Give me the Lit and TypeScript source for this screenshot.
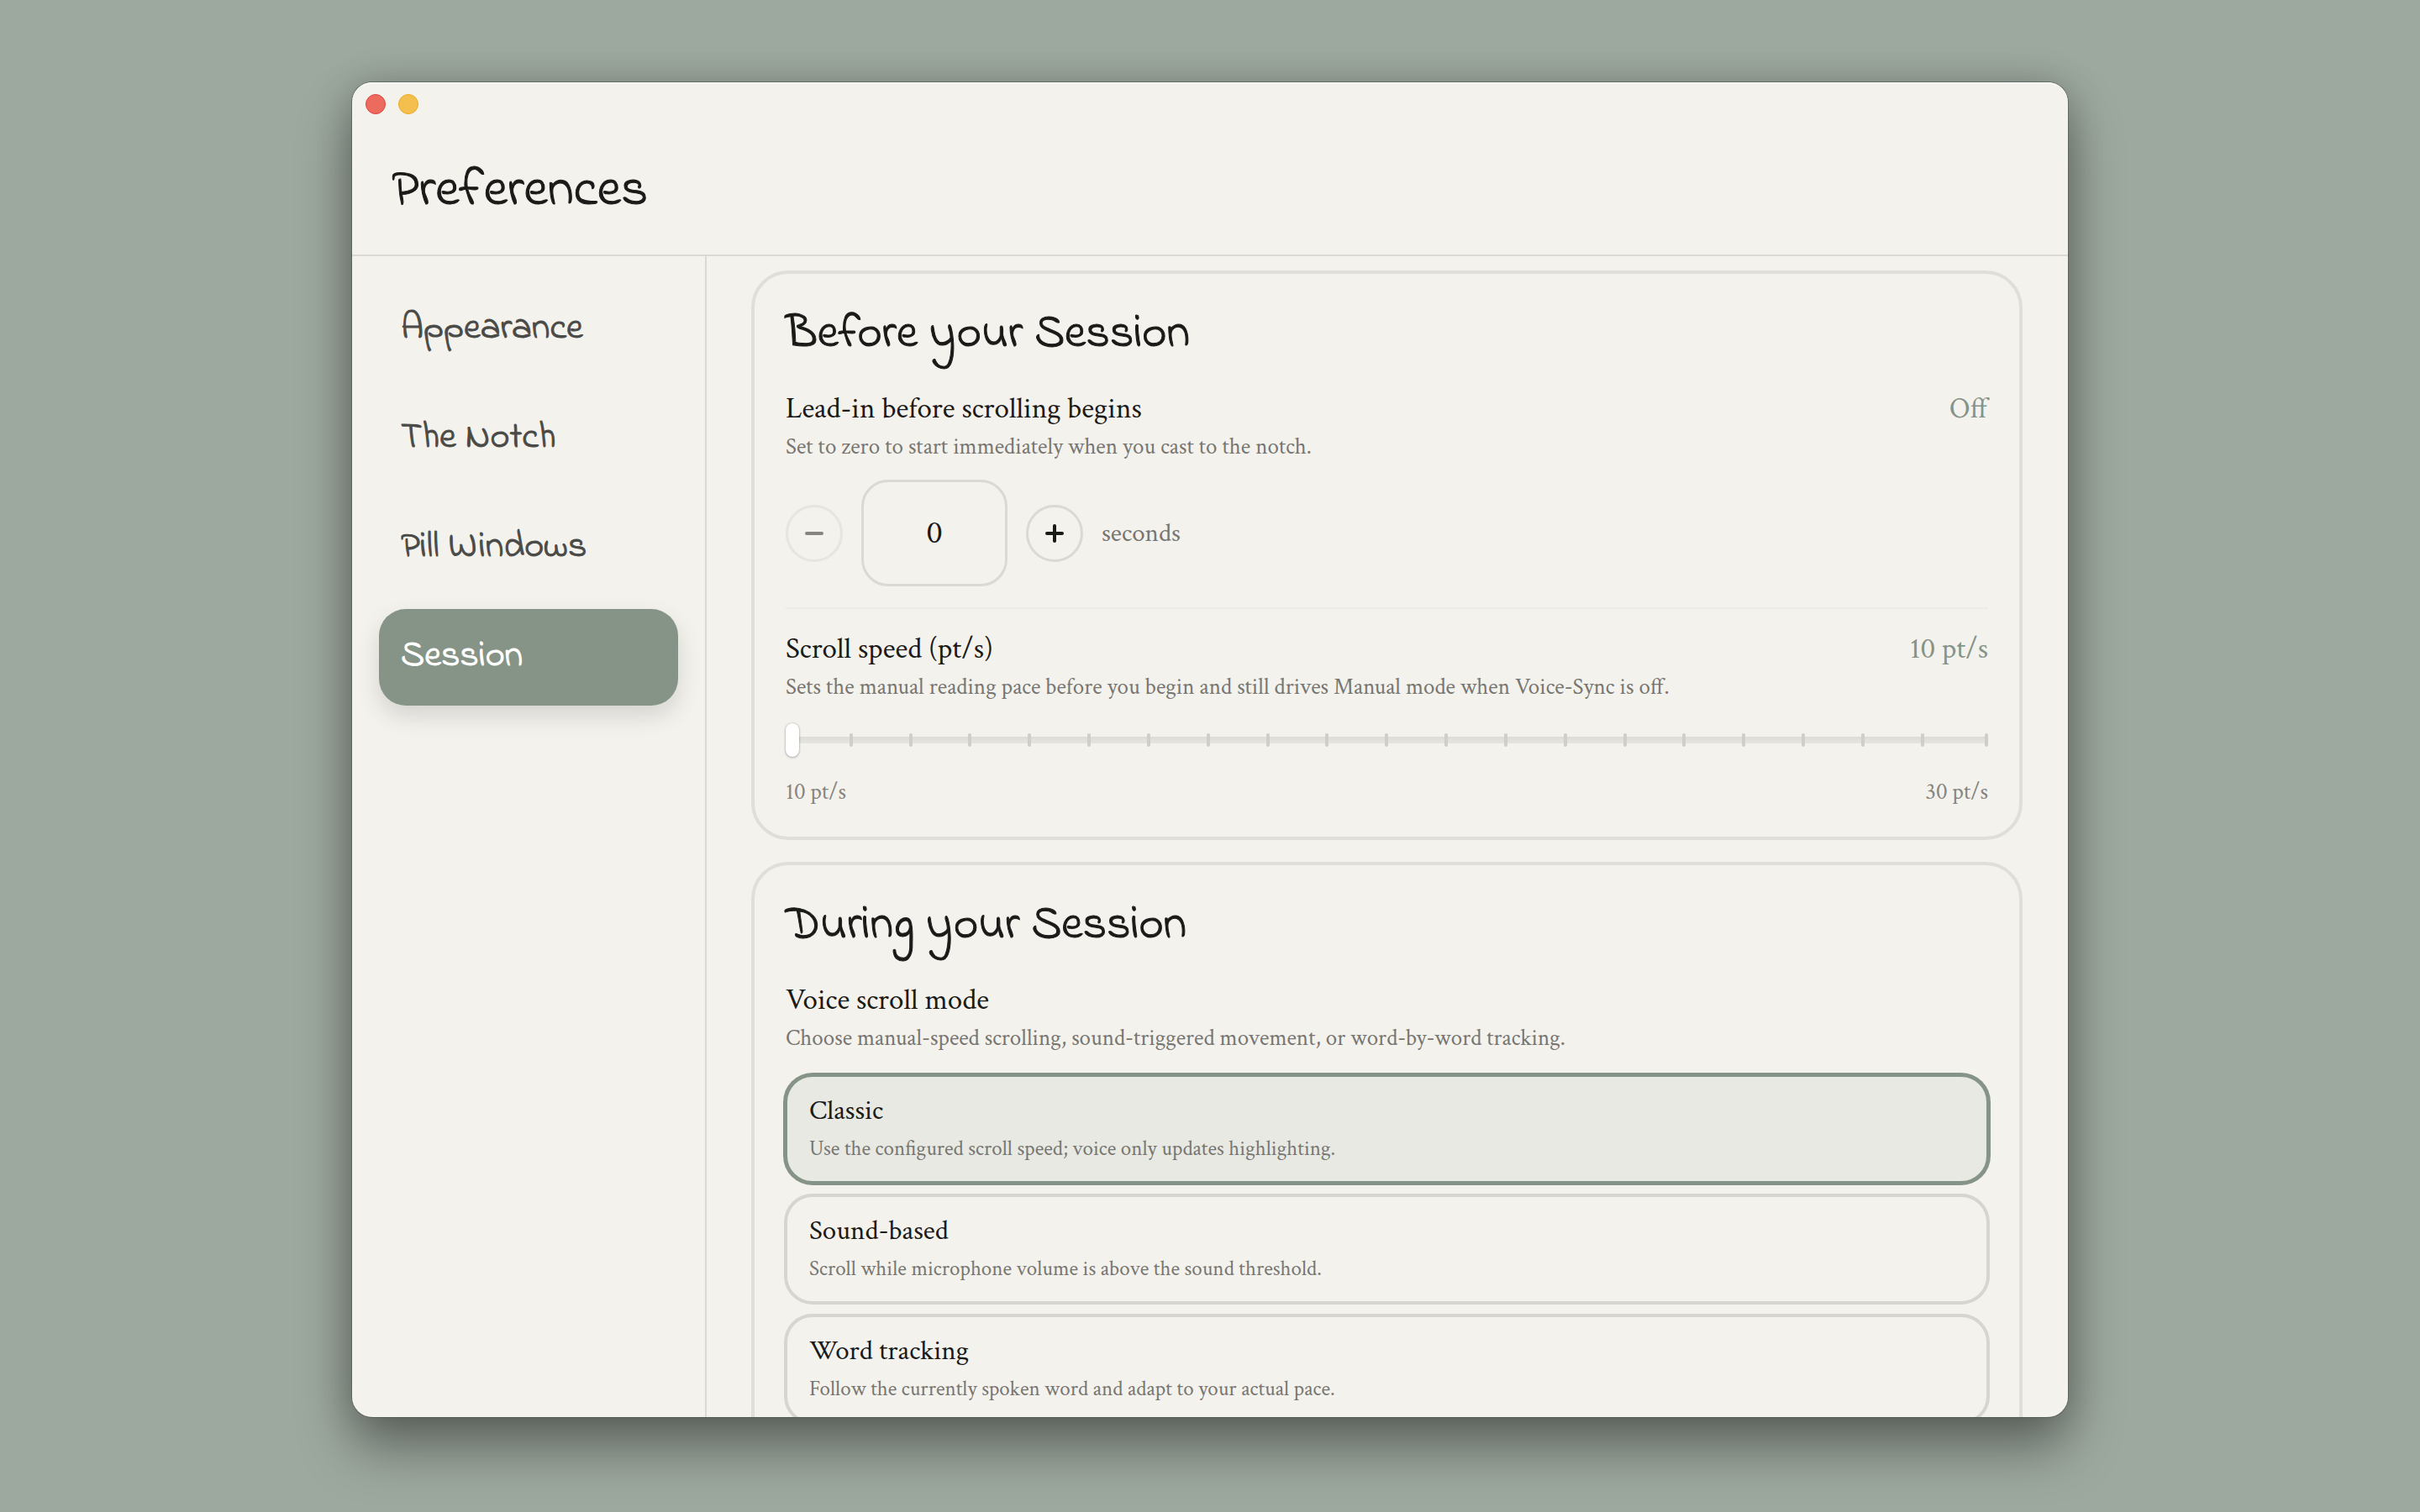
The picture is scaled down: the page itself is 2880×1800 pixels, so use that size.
import { LitElement, html, css, svg } from "lit";
import { customElement, state } from "lit/decorators.js";
import { classMap } from "lit/directives/class-map.js";

const sections = ["Appearance", "The Notch", "Pill Windows", "Session"];

const modes = [
  {
    id: "classic",
    name: "Classic",
    about: "Use the configured scroll speed; voice only updates highlighting.",
  },
  {
    id: "sound",
    name: "Sound-based",
    about: "Scroll while microphone volume is above the sound threshold.",
  },
  {
    id: "word",
    name: "Word tracking",
    about: "Follow the currently spoken word and adapt to your actual pace.",
  },
];

@customElement("app-root")
export class AppRoot extends LitElement {
  @state() section = "Session";
  @state() leadIn = 0;
  @state() speed = 10;
  @state() mode = "classic";

  static styles = css`
    :host {
      --paper: #f4f2ed;
      --ink: #1a1a18;
      --muted: #777672;
      --sage: #869487;
      --line: #dad9d4;
      --hand: "Indie Flower", Lato, sans-serif;
      --body: "Crimson Text", "Liberation Serif", serif;
      display: flex;
      justify-content: center;
      box-sizing: border-box;
      height: 100vh;
      padding: 98px 24px 113px;
      overflow: hidden;
      background: #9da89e;
      color: var(--ink);
      font-family: var(--body);
    }
    * {
      box-sizing: border-box;
    }
    h1,
    h2,
    p {
      margin: 0;
      font-weight: 400;
    }
    button {
      font: inherit;
      color: inherit;
      border: 0;
      background: none;
      cursor: pointer;
    }
    .window {
      display: flex;
      flex-direction: column;
      width: 100%;
      max-width: 2042px;
      border-radius: 24px;
      overflow: hidden;
      background: var(--paper);
      box-shadow:
        inset 0 1px #fff,
        0 0 0 1px #4c5950aa,
        0 36px 64px rgba(0, 0, 0, 0.38),
        0 0 44px rgba(0, 0, 0, 0.18);
    }
    .header {
      flex: none;
      border-bottom: 2px solid var(--line);
    }
    .titlebar {
      display: flex;
      gap: 15px;
      padding: 14px 16px;
    }
    .light {
      width: 24px;
      height: 24px;
      padding: 0;
      border-radius: 50%;
    }
    .close {
      background: #ed6a5e;
      border: 1px solid #e0443e;
    }
    .minimise {
      background: #f5bf4f;
      border: 1px solid #e9ac1f;
    }
    .title {
      padding: 42px 47px 39px;
      font-family: var(--hand);
      font-size: 63px;
      line-height: 72px;
      -webkit-text-stroke: 1px;
    }
    .body {
      display: flex;
      flex: 1;
      min-height: 0;
    }
    .nav {
      display: flex;
      flex: none;
      flex-direction: column;
      gap: 15px;
      width: 422px;
      padding: 30px 32px;
      border-right: 2px solid var(--line);
    }
    .tab {
      padding: 26px 26px 29px;
      border-radius: 32px;
      color: #4a4a47;
      font-family: var(--hand);
      font-size: 44px;
      line-height: 60px;
      text-align: left;
      -webkit-text-stroke: 1px;
    }
    .tab.current {
      background: var(--sage);
      color: #fff;
      box-shadow: 0 12px 28px rgba(0, 0, 0, 0.13);
    }
    .main {
      display: flex;
      flex: 1;
      flex-direction: column;
      gap: 26px;
      min-width: 0;
      padding: 17px 54px 17px 53px;
      overflow: hidden;
    }
    .card {
      flex: none;
      padding: 37px 37px 35px;
      border: 4px solid #dfded9;
      border-radius: 44px;
    }
    .heading {
      margin-bottom: 32px;
      font-family: var(--hand);
      font-size: 56px;
      line-height: 72px;
      -webkit-text-stroke: 1px;
    }
    .row {
      display: flex;
      justify-content: space-between;
      font-size: 35px;
      line-height: 40px;
    }
    .value {
      color: var(--sage);
    }
    .about {
      margin-top: 7px;
      color: var(--muted);
      font-size: 27px;
      line-height: 36px;
    }
    .stepper {
      display: flex;
      align-items: center;
      gap: 22px;
      margin-top: 21px;
    }
    .step {
      display: grid;
      place-items: center;
      width: 68px;
      height: 68px;
      padding: 0;
      border: 3px solid var(--line);
      border-radius: 50%;
    }
    .step:disabled {
      opacity: 0.5;
    }
    .step svg {
      width: 28px;
      height: 28px;
    }
    .count {
      width: 174px;
      height: 127px;
      padding: 0;
      border: 3px solid var(--line);
      border-radius: 32px;
      background: none;
      color: inherit;
      font: 500 38px var(--body);
      text-align: center;
    }
    .unit {
      color: var(--muted);
      font-size: 31px;
    }
    .rule {
      height: 2px;
      margin: 25px 0 28px;
      border: 0;
      background: #ecebe6;
    }
    .slider {
      position: relative;
      height: 40px;
      margin-top: 25px;
    }
    .ticks {
      position: absolute;
      inset: 12px 0;
      display: flex;
      gap: 72px;
      padding-left: 5px;
      background: linear-gradient(#dddcd7, #e5e4df) center / 100% 8px no-repeat;
    }
    .steps {
      display: flex;
      flex: 1;
      justify-content: space-between;
    }
    .tick {
      width: 4px;
      border-radius: 2px;
      background: #cfcec9;
    }
    .range {
      position: absolute;
      inset: 0;
      width: 100%;
      height: 40px;
      margin: 0;
      appearance: none;
      background: none;
    }
    .range::-webkit-slider-thumb {
      appearance: none;
      width: 16px;
      height: 40px;
      border-radius: 8px;
      background: #fff;
      box-shadow:
        0 0 2px rgba(0, 0, 0, 0.25),
        0 1px 3px rgba(0, 0, 0, 0.25);
    }
    .bounds {
      display: flex;
      justify-content: space-between;
      margin-top: 24px;
      color: #858480;
      font-size: 27px;
      line-height: 36px;
    }
    .modes {
      display: flex;
      flex-direction: column;
      gap: 11px;
      margin: 24px -2px 0;
    }
    .mode {
      display: grid;
      gap: 9px;
      padding: 21px 26px 22px;
      border: 4px solid #d6d5d0;
      border-radius: 34px;
      cursor: pointer;
    }
    .mode.chosen {
      border-color: var(--sage);
      background: #e8e9e2;
      box-shadow: 0 0 0 1px var(--sage);
    }
    .radio {
      position: absolute;
      opacity: 0;
      pointer-events: none;
    }
    .name {
      font-size: 33px;
      line-height: 40px;
    }
    .detail {
      color: var(--muted);
      font-size: 25px;
      line-height: 32px;
    }
  `;

  private glyph(plus: boolean) {
    return html`<svg viewBox="0 0 28 28" aria-hidden="true" fill="none" stroke="currentColor" stroke-width="4" stroke-linecap="round">
      <path d="M5 14H23" />
      ${plus ? svg`<path d="M14 5V23" />` : ""}
    </svg>`;
  }

  render() {
    return html`
      <div class="window">
        <header class="header">
          <div class="titlebar">
            <button class="light close" aria-label="Close"></button>
            <button class="light minimise" aria-label="Minimise"></button>
          </div>
          <h1 class="title">Preferences</h1>
        </header>
        <div class="body">
          <nav class="nav">
            ${sections.map(
              (name) => html`<button
                class=${classMap({ tab: true, current: name === this.section })}
                @click=${() => (this.section = name)}
              >${name}</button>`
            )}
          </nav>
          <main class="main">
            <section class="card">
              <h2 class="heading">Before your Session</h2>
              <div class="row">
                <label for="lead">Lead-in before scrolling begins</label>
                <span class="value">${this.leadIn ? `${this.leadIn} s` : "Off"}</span>
              </div>
              <p class="about">Set to zero to start immediately when you cast to the notch.</p>
              <div class="stepper">
                <button class="step" aria-label="Less" ?disabled=${this.leadIn === 0}
                  @click=${() => (this.leadIn -= 1)}>${this.glyph(false)}</button>
                <input class="count" id="lead" inputmode="numeric" .value=${String(this.leadIn)}
                  @change=${(e: Event) =>
                    (this.leadIn = Math.max(0, Number((e.target as HTMLInputElement).value) || 0))} />
                <button class="step" aria-label="More"
                  @click=${() => (this.leadIn += 1)}>${this.glyph(true)}</button>
                <span class="unit">seconds</span>
              </div>
              <hr class="rule" />
              <div class="row">
                <label for="speed">Scroll speed (pt/s)</label>
                <span class="value">${this.speed} pt/s</span>
              </div>
              <p class="about">
                Sets the manual reading pace before you begin and still drives Manual mode when Voice-Sync is off.
              </p>
              <div class="slider">
                <div class="ticks">
                  <div class="steps">${Array.from({ length: 20 }, () => html`<i class="tick"></i>`)}</div>
                  <i class="tick"></i>
                </div>
                <input class="range" id="speed" type="range" min="10" max="30" .value=${String(this.speed)}
                  @input=${(e: Event) => (this.speed = Number((e.target as HTMLInputElement).value))} />
              </div>
              <div class="bounds"><span>10 pt/s</span><span>30 pt/s</span></div>
            </section>
            <section class="card">
              <h2 class="heading">During your Session</h2>
              <div class="row"><span id="mode-label">Voice scroll mode</span></div>
              <p class="about">Choose manual-speed scrolling, sound-triggered movement, or word-by-word tracking.</p>
              <div class="modes" role="radiogroup" aria-labelledby="mode-label">
                ${modes.map(
                  (m) => html`<label class=${classMap({ mode: true, chosen: m.id === this.mode })}>
                    <input class="radio" type="radio" name="mode" .checked=${m.id === this.mode}
                      @change=${() => (this.mode = m.id)} />
                    <span class="name">${m.name}</span>
                    <span class="detail">${m.about}</span>
                  </label>`
                )}
              </div>
            </section>
          </main>
        </div>
      </div>
    `;
  }
}
